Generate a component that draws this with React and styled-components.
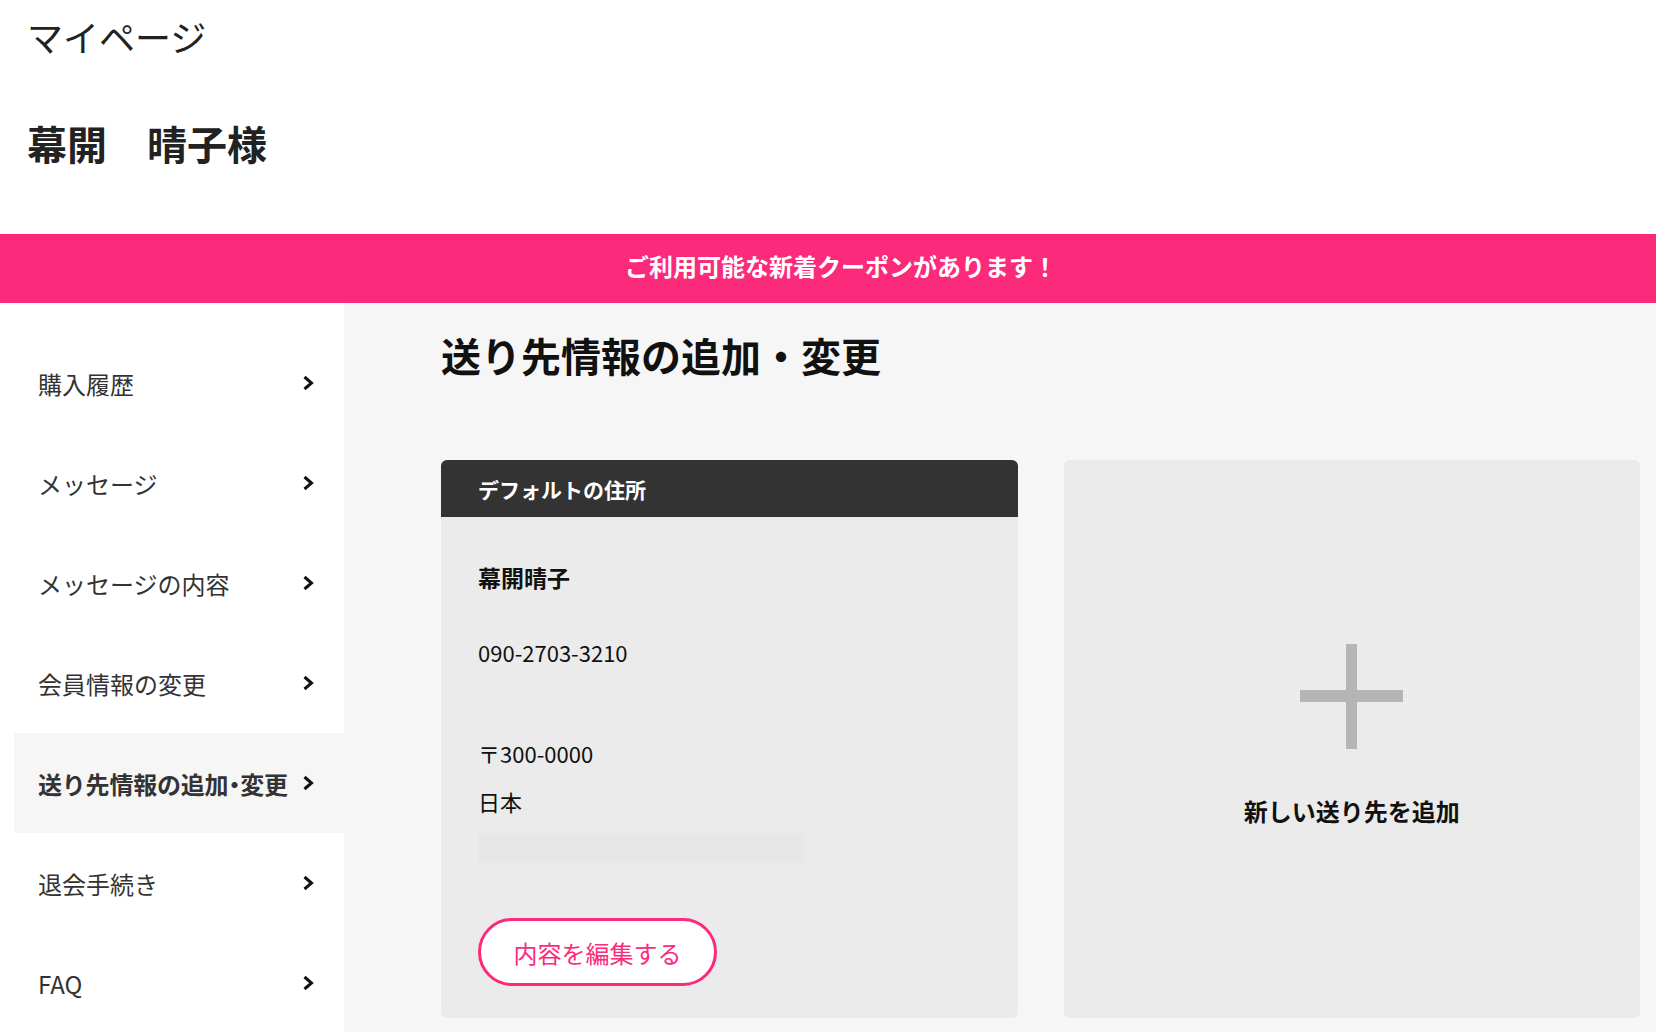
import React from "react";
import styled, { createGlobalStyle } from "styled-components";

const GlobalStyle = createGlobalStyle`
  * { box-sizing: border-box; }
  html, body {
    margin: 0;
    padding: 0;
    background: #ffffff;
    font-family: "Noto Sans CJK JP", "Noto Sans", sans-serif;
    color: #222;
  }
`;

const PINK = "#fc2a7a";

const Page = styled.div`
  width: 1656px;
  min-height: 1032px;
  display: flex;
  flex-direction: column;
`;

const Top = styled.header`
  height: 234px;
  padding: 14px 27px 0;
  background: #fff;
`;

const PageTitle = styled.h1`
  margin: 0;
  font-size: 36px;
  line-height: 44px;
  font-weight: 400;
  color: #222;
`;

const UserName = styled.div`
  margin-top: 59px;
  font-size: 40px;
  line-height: 52px;
  font-weight: 700;
  color: #222;
`;

const Banner = styled.div`
  height: 69px;
  padding: 0 0 6px 26px;
  background: ${PINK};
  color: #fff;
  font-size: 24px;
  font-weight: 700;
  display: flex;
  align-items: center;
  justify-content: center;
`;

const Body = styled.div`
  flex: 1;
  display: grid;
  grid-template-columns: 344px 1fr;
`;

const Sidebar = styled.nav`
  background: #fff;
  padding-top: 30px;
`;

const NavItem = styled.a`
  height: 100px;
  margin-left: 14px;
  padding: 0 30px 0 24px;
  display: flex;
  align-items: center;
  justify-content: space-between;
  gap: 8px;
  font-size: 24px;
  color: #333;
  font-weight: ${(p) => (p.$active ? 700 : 400)};
  background: ${(p) => (p.$active ? "#f6f6f6" : "transparent")};
  text-decoration: none;
  white-space: nowrap;
  cursor: pointer;
`;

const NavLabel = styled.span`
  font-feature-settings: ${(p) => (p.$tight ? '"halt"' : "normal")};
  letter-spacing: ${(p) => (p.$tight ? "-0.2px" : "0")};
`;

const Main = styled.main`
  background: #f6f6f6;
  padding: 26px 16px 15px 97px;
`;

const Heading = styled.h2`
  margin: 0;
  font-size: 40px;
  line-height: 52px;
  font-weight: 700;
  color: #111;
`;

const Cards = styled.div`
  margin-top: 79px;
  display: grid;
  grid-template-columns: 1fr 1fr;
  gap: 46px;
`;

const Card = styled.section`
  height: 558px;
  background: #ebebeb;
  border-radius: 6px;
  overflow: hidden;
`;

const CardHeader = styled.div`
  height: 57px;
  background: #333;
  color: #fff;
  font-size: 21px;
  font-weight: 700;
  padding-left: 37px;
  display: flex;
  align-items: center;
`;

const CardBody = styled.div`
  padding: 44px 37px 0;
  display: flex;
  flex-direction: column;
  align-items: flex-start;
`;

const Line = styled.div`
  margin-top: ${(p) => p.$gap || 0}px;
  font-size: ${(p) => (p.$bold ? 23 : 22)}px;
  line-height: 32px;
  font-weight: ${(p) => (p.$bold ? 700 : 400)};
  color: #111;
`;

const Redacted = styled.div`
  margin-top: 16px;
  width: 326px;
  height: 30px;
  background: #e7e7e7;
`;

const EditButton = styled.button`
  margin-top: 55px;
  width: 239px;
  height: 68px;
  border: 3px solid ${PINK};
  border-radius: 34px;
  background: #fff;
  color: ${PINK};
  font-family: inherit;
  font-size: 24px;
  font-weight: 400;
  cursor: pointer;
`;

const AddCard = styled(Card)`
  display: flex;
  flex-direction: column;
  align-items: center;
  justify-content: center;
  gap: 46px;
  padding-bottom: 8px;
  cursor: pointer;
`;

const AddLabel = styled.div`
  font-size: 24px;
  line-height: 32px;
  font-weight: 700;
  color: #111;
`;

const Chevron = () => (
  <svg width="12" height="16" viewBox="0 0 12 16" style={{ flexShrink: 0 }}>
    <polyline points="2.5,2 9.5,8 2.5,14" fill="none" stroke="#111" strokeWidth="3" />
  </svg>
);

const Plus = () => (
  <svg width="103" height="105" viewBox="0 0 103 105">
    <rect x="46" y="0" width="11" height="105" fill="#b5b5b5" />
    <rect x="0" y="46" width="103" height="12" fill="#b5b5b5" />
  </svg>
);

const menu = [
  "購入履歴",
  "メッセージ",
  "メッセージの内容",
  "会員情報の変更",
  "送り先情報の追加・変更",
  "退会手続き",
  "FAQ",
];

export default function App() {
  return (
    <Page>
      <GlobalStyle />
      <Top>
        <PageTitle>マイページ</PageTitle>
        <UserName>幕開　晴子様</UserName>
      </Top>
      <Banner>ご利用可能な新着クーポンがあります！</Banner>
      <Body>
        <Sidebar>
          {menu.map((label, i) => (
            <NavItem key={label} $active={i === 4}>
              <NavLabel $tight={label.includes("・")}>{label}</NavLabel>
              <Chevron />
            </NavItem>
          ))}
        </Sidebar>
        <Main>
          <Heading>送り先情報の追加・変更</Heading>
          <Cards>
            <Card>
              <CardHeader>デフォルトの住所</CardHeader>
              <CardBody>
                <Line $bold>幕開晴子</Line>
                <Line $gap={43}>090-2703-3210</Line>
                <Line $gap={69}>〒300-0000</Line>
                <Line $gap={16}>日本</Line>
                <Redacted />
                <EditButton>内容を編集する</EditButton>
              </CardBody>
            </Card>
            <AddCard>
              <Plus />
              <AddLabel>新しい送り先を追加</AddLabel>
            </AddCard>
          </Cards>
        </Main>
      </Body>
    </Page>
  );
}
